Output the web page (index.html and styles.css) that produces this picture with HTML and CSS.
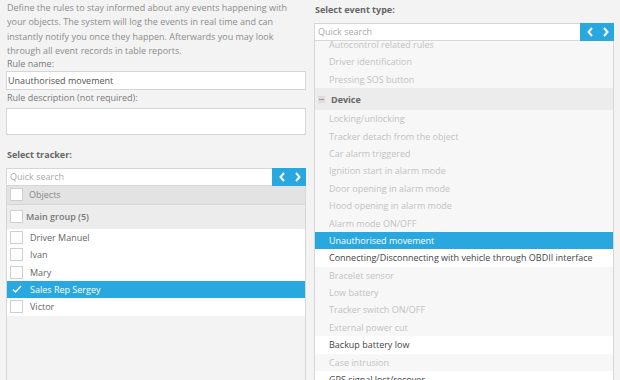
FILE: index.html
```html
<!DOCTYPE html>
<html lang="en">
<head>
  <meta charset="UTF-8">
  <title>Rule editor</title>
  <link rel="stylesheet" href="styles.css">
</head>
<body>
  <div class="page">
    <div class="col">
      <p class="intro">Define the rules to stay informed about any events happening with your objects. The system will log the events in real time and can instantly notify you once they happen. Afterwards you may look through all event records in table reports.</p>
      <label class="label">Rule name:</label>
      <div class="input">Unauthorised movement</div>
      <label class="label label-desc">Rule description (not required):</label>
      <div class="textarea"></div>

      <h3 class="title title-tracker">Select tracker:</h3>
      <div class="search">
        <span class="placeholder">Quick search</span>
        <span class="nav">
          <svg width="34" height="18" viewBox="0 0 34 18"><polyline points="12,5 8.5,9 12,13" /><polyline points="24,5 27.5,9 24,13" /></svg>
        </span>
      </div>
      <div class="tree">
        <div class="tree-head"><span class="box"></span>Objects</div>
        <div class="tree-group"><span class="box"></span>Main group (5)</div>
        <div class="tree-item"><span class="box"></span>Driver Manuel</div>
        <div class="tree-item"><span class="box"></span>Ivan</div>
        <div class="tree-item"><span class="box"></span>Mary</div>
        <div class="tree-item selected">
          <svg class="check" width="12" height="12" viewBox="0 0 12 12"><polyline points="2,6.5 4.5,9 10,3" /></svg>Sales Rep Sergey
        </div>
        <div class="tree-item"><span class="box"></span>Victor</div>
      </div>
    </div>

    <div class="col">
      <h3 class="title title-event">Select event type:</h3>
      <div class="search">
        <span class="placeholder">Quick search</span>
        <span class="nav">
          <svg width="34" height="18" viewBox="0 0 34 18"><polyline points="12,5 8.5,9 12,13" /><polyline points="24,5 27.5,9 24,13" /></svg>
        </span>
      </div>
      <div class="events">
        <div class="events-inner">
          <div class="ev off">Autocontrol related rules</div>
          <div class="ev off">Driver identification</div>
          <div class="ev off">Pressing SOS button</div>
          <div class="ev-group"><span class="minus"></span>Device</div>
          <div class="ev off">Locking/unlocking</div>
          <div class="ev off">Tracker detach from the object</div>
          <div class="ev off">Car alarm triggered</div>
          <div class="ev off">Ignition start in alarm mode</div>
          <div class="ev off">Door opening in alarm mode</div>
          <div class="ev off">Hood opening in alarm mode</div>
          <div class="ev off">Alarm mode ON/OFF</div>
          <div class="ev selected">Unauthorised movement</div>
          <div class="ev">Connecting/Disconnecting with vehicle through OBDII interface</div>
          <div class="ev off">Bracelet sensor</div>
          <div class="ev off">Low battery</div>
          <div class="ev off">Tracker switch ON/OFF</div>
          <div class="ev off">External power cut</div>
          <div class="ev">Backup battery low</div>
          <div class="ev off">Case intrusion</div>
          <div class="ev">GPS signal lost/recover</div>
        </div>
      </div>
    </div>
  </div>
</body>
</html>
```

FILE: styles.css
```css
body {
  margin: 0;
  background: #f3f3f3;
  font-family: "Open Sans", "Liberation Sans", sans-serif;
  font-size: 9px;
  color: #555;
  height: 380px;
  overflow: hidden;
}
.page {
  display: flex;
  gap: 8px;
  padding: 0 6px;
}
.col {
  width: 300px;
  display: flex;
  flex-direction: column;
}
.intro {
  margin: 0;
  padding: 1px 0 0 1px;
  line-height: 14.4px;
  color: #8c8c8c;
}
.label {
  display: block;
  line-height: 10px;
  margin: 0 0 2px 1px;
  color: #7a7a7a;
}
.label-desc {
  margin-top: 3px;
  margin-bottom: 5px;
}
.input {
  height: 17px;
  line-height: 17px;
  border: 1px solid #d6d6d6;
  background: #fff;
  padding: 0 1px;
  color: #555;
}
.textarea {
  height: 25px;
  border: 1px solid #d6d6d6;
  background: #fff;
}
.title {
  margin: 0 0 8px 1px;
  font-size: 9px;
  line-height: 10px;
  font-weight: 700;
  color: #666;
}
.title-tracker {
  margin-top: 15px;
}
.title-event {
  margin-top: 5px;
}
.search {
  display: flex;
  height: 18px;
  background: #fff;
  border: 1px solid #d6d6d6;
  border-right: none;
  box-sizing: border-box;
}
.placeholder {
  flex: 1;
  line-height: 16px;
  padding-left: 3px;
  color: #aaa;
}
.nav {
  width: 34px;
  margin: -1px 0;
  height: 18px;
  background: #29a8e0;
}
.nav svg polyline {
  fill: none;
  stroke: #fff;
  stroke-width: 2;
}
.tree {
  border: 1px solid #d6d6d6;
  border-top: none;
  flex: 1;
  height: 200px;
}
.box {
  width: 11px;
  height: 11px;
  border: 1px solid #cfcfcf;
  background: #fff;
  margin: 0 6px 0 3px;
  flex: none;
}
.tree-head {
  display: flex;
  align-items: center;
  height: 18px;
  background: #e3e3e3;
  border-bottom: 1px solid #d6d6d6;
  color: #888;
}
.tree-group {
  display: flex;
  align-items: center;
  height: 24px;
  background: #ececec;
  color: #777;
  font-weight: 600;
}
.tree-group .box {
  margin-right: 3px;
}
.tree-item {
  display: flex;
  align-items: center;
  height: 17.4px;
  background: #fff;
  color: #666;
}
.tree-item .box {
  margin-right: 7px;
}
.tree-item.selected {
  background: #29a8e0;
  color: #fff;
}
.check {
  margin: 0 7px 0 4px;
}
.check polyline {
  fill: none;
  stroke: #fff;
  stroke-width: 1.5;
}
.events {
  border: 1px solid #d6d6d6;
  border-top: none;
  flex: 1;
  overflow: hidden;
  height: 340px;
}
.events-inner {
  margin-top: -5px;
}
.ev {
  height: 17.4px;
  line-height: 17.4px;
  padding-left: 14px;
  background: #fff;
  color: #444;
  white-space: nowrap;
}
.ev.off {
  background: #f7f7f7;
  color: #c2c2c2;
}
.ev.selected {
  background: #29a8e0;
  color: #fff;
}
.ev-group {
  display: flex;
  align-items: center;
  height: 22px;
  background: #ececec;
  color: #666;
  font-weight: 700;
}
.minus {
  width: 7px;
  height: 7px;
  margin: 0 6px 0 3px;
  background: #dcdcdc;
  position: relative;
}
.minus::after {
  content: "";
  position: absolute;
  left: 1px;
  right: 1px;
  top: 3px;
  height: 1px;
  background: #999;
}
```
